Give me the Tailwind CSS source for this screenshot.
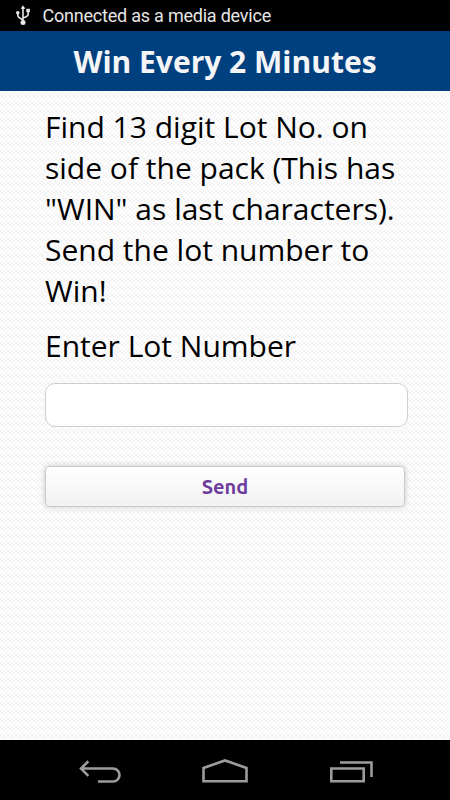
<!DOCTYPE html>
<html lang="en">
<head>
  <meta charset="UTF-8" />
  <meta name="viewport" content="width=device-width, initial-scale=1.0" />
  <title>Win Every 2 Minutes</title>
  <script src="https://cdn.jsdelivr.net/npm/@tailwindcss/browser@4"></script>
</head>
<body class="bg-black w-[450px] h-[800px] overflow-hidden flex flex-col font-['Open_Sans',sans-serif]">

  <!-- Status bar -->
  <div class="h-[31px] shrink-0 flex items-center pl-[15px] bg-black">
    <svg class="w-4 h-[22px] shrink-0" viewBox="0 0 16 22" fill="none" stroke="#e8e8e8" stroke-width="1.6">
      <path d="M8 2v16M2.8 9v1.6q0 2 5.2 4.2M13.2 7v2.2q0 2-5.2 3.8" />
      <path d="M8 .2l2.4 3.6H5.6z" fill="#e8e8e8" stroke="none" />
      <circle cx="2.8" cy="7.8" r="1.8" fill="#e8e8e8" stroke="none" />
      <path d="M11.3 3.8h3.6v3.4h-3.6z" fill="#e8e8e8" stroke="none" />
      <circle cx="8" cy="17.5" r="2.5" fill="#e8e8e8" stroke="none" />
    </svg>
    <span class="ml-[11.5px] text-[18px] leading-[31px] tracking-[-0.22px] text-[#e6e6e6] whitespace-nowrap font-[Roboto,sans-serif]">Connected as a media device</span>
  </div>

  <!-- Title -->
  <header class="h-[60px] shrink-0 flex items-center justify-center bg-[#00407f]">
    <h1 class="pt-0.5 text-[30px] leading-[60px] font-bold text-[#f5f5f7] whitespace-nowrap">Win Every 2 Minutes</h1>
  </header>

  <main class="relative h-[649px] shrink-0 bg-[#fdfdfd]">
    <!-- Woven background -->
    <svg class="absolute inset-0 w-full h-full">
      <defs>
        <pattern id="weave" width="8" height="8" patternUnits="userSpaceOnUse">
          <path d="M0 4l4 4M2 2l4 4M4 0l4 4M0 4l2-2M2 6l2-2M4 8l4-4M6 2l2-2" stroke="#f1f1f1" stroke-width=".9" fill="none" />
        </pattern>
      </defs>
      <rect width="100%" height="100%" fill="url(#weave)" />
    </svg>

    <form class="relative pl-[45px] pt-[15px] text-black">
      <p class="text-[30px] leading-[41px] whitespace-nowrap">
        Find 13 digit Lot No. on<br />
        side of the pack (This has<br />
        "WIN" as last characters).<br />
        Send the lot number to<br />
        Win!
      </p>
      <label for="lot" class="block mt-3.5 text-[30px] leading-[41px]">Enter Lot Number</label>
      <input id="lot" type="text" class="block mt-[17px] w-[363px] h-11 rounded-[10px] border border-[#cfcfcf] bg-white" />
      <button type="button" class="block mt-[39px] w-[360px] h-[41px] rounded-[4px] border border-[#c9c9c9] bg-linear-to-b from-white to-[#f2f2f2] shadow-[0_0_6px_rgba(0,0,0,0.18)] text-[20px] leading-[39px] font-bold text-[#6c3d9e] font-[Ubuntu,'Noto_Sans',sans-serif]">Send</button>
    </form>
  </main>

  <!-- Navigation bar -->
  <nav class="h-[60px] shrink-0 bg-black">
    <svg class="block w-[450px] h-[60px]" viewBox="0 0 450 60" fill="none" stroke="#9c9c9c" stroke-width="2.6">
      <path d="M81 28.5h32a6.4 6.4 0 0 1 0 13H98M88.3 21.3L81 28.5l7.3 7.3" />
      <path d="M203.5 41.3V28L225 20.4 246.5 28v13.3z" />
      <path d="M331.3 28.5h32.4v12.8h-32.4zM340 22.5h31.5V37" />
    </svg>
  </nav>

</body>
</html>
